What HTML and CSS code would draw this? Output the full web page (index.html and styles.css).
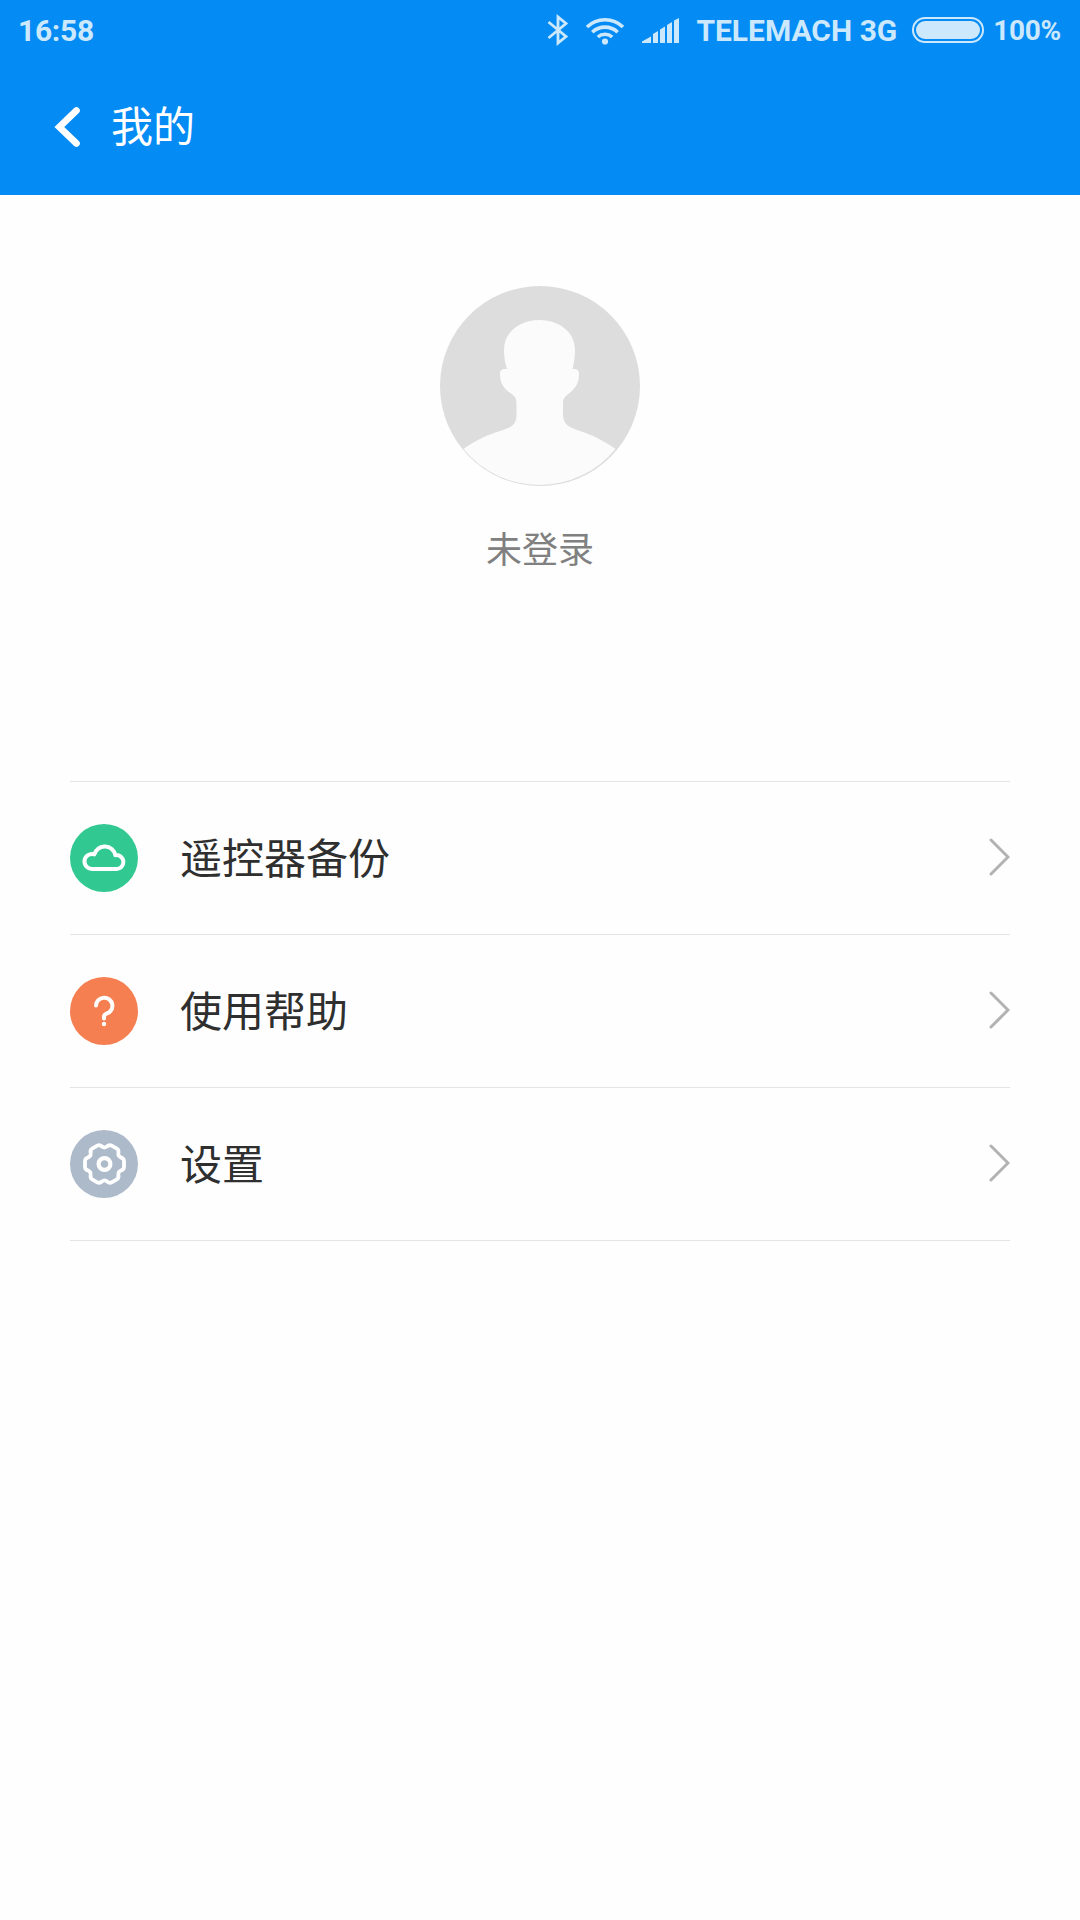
FILE: index.html
```html
<!DOCTYPE html>
<html lang="zh-CN">
<head>
    <meta charset="UTF-8">
    <meta name="viewport" content="width=device-width, initial-scale=1.0">
    <title>我的</title>
    <link rel="stylesheet" href="styles.css">
</head>
<body>

<header>
    <div class="status-bar">
        <span class="time">16:58</span>
        <div class="status-icons">
            <svg class="bluetooth" width="22" height="32" viewBox="0 0 22 32" fill="none" stroke="currentColor" stroke-width="2.8">
                <path d="M1.500 8L19 22.500L11 29V3L19 9.500L1.500 24"/>
            </svg>
            <svg class="wifi" width="40" height="30" viewBox="0 0 40 30">
                <g fill="none" stroke="currentColor" stroke-width="3.600">
                    <path d="M2 12A26 26 0 0 1 38 12"/>
                    <path d="M7.300 17.200A18.500 18.500 0 0 1 32.700 17.200"/>
                    <path d="M12.800 22A11 11 0 0 1 27.200 22"/>
                </g>
                <circle cx="20" cy="26.500" r="3.100" fill="currentColor"/>
            </svg>
            <svg class="signal" width="37" height="25" viewBox="0 0 37 25" fill="currentColor">
                <path d="M0 25V23.500L9 18.500V25ZM11 25V16L16 13V25ZM18 25V11.500L23 8.500V25ZM25 25V7L30 4V25ZM32 25V2.500L37 0V25Z"/>
            </svg>
            <span class="carrier">TELEMACH 3G</span>
            <div class="battery"><div class="battery-level"></div></div>
            <span class="percent">100%</span>
        </div>
    </div>
    <div class="title-bar">
        <svg class="back" width="30" height="44" viewBox="0 0 30 44" fill="none" stroke="#fff" stroke-width="6.700" stroke-linecap="round">
            <path d="M24.500 5.500L7.300 22L24.500 38.500"/>
        </svg>
        <h1>我的</h1>
    </div>
</header>

<div class="profile">
    <svg class="avatar" width="200" height="200" viewBox="0 0 200 200">
        <circle cx="100" cy="100" r="100" fill="#ddd"/>
        <path fill="#fbfbfb" d="M99.500 34C81 34 64 45 64 64C64 71 65 77 67 83C62 82.500 60 84 60 88C60 98 64 103 73 109C76 112 76.500 113 76.500 118V128C76.500 138 73 141 60 145C47 149 36 154 23.500 163A98.200 98.200 0 0 0 175.500 163C163 154 152 149 140 145C128 141 123 138 123 128V118C123 113 124 112 127 109C135 103 139 98 139 88C139 84 137 82.500 132.500 83C134 77 135 71 135 64C135 45 118 34 99.500 34Z"/>
    </svg>
    <div class="login-state">未登录</div>
</div>

<ul class="menu">
    <li class="menu-item">
        <svg class="icon" width="68" height="68" viewBox="0 0 68 68">
            <circle cx="34" cy="34" r="34" fill="#32c892"/>
            <path fill="none" stroke="#fff" stroke-width="4" stroke-linejoin="round" d="M22.500 45A7.500 7.500 0 1 1 24.300 30.400A10.800 10.800 0 0 1 45.300 31.200A6.950 6.950 0 1 1 46.200 45Z"/>
        </svg>
        <span class="label">遥控器备份</span>
        <svg class="arrow" width="22" height="40" viewBox="0 0 22 40"><path d="M3 3L20 20L3 37"/></svg>
    </li>
    <li class="menu-item">
        <svg class="icon" width="68" height="68" viewBox="0 0 68 68">
            <circle cx="34" cy="34" r="34" fill="#f57f51"/>
            <path fill="none" stroke="#fff" stroke-width="4" stroke-linecap="round" d="M26 28.500A8.200 8.200 0 1 1 36.500 36.700Q34 37.700 34 40V41.500"/>
            <circle cx="34" cy="47" r="2.200" fill="#fff"/>
        </svg>
        <span class="label">使用帮助</span>
        <svg class="arrow" width="22" height="40" viewBox="0 0 22 40"><path d="M3 3L20 20L3 37"/></svg>
    </li>
    <li class="menu-item">
        <svg class="icon" width="68" height="68" viewBox="0 0 68 68">
            <circle cx="34" cy="34" r="34" fill="#acbac9"/>
            <g transform="translate(34.500 34)" fill="none" stroke="#fff" stroke-width="3.800" stroke-linecap="round">
                <!-- one tooth, repeated six times -->
                <path id="tooth" d="M17.500 -6C19 -5.300 19.500 -4.300 19.500 -3V3C19.500 4.300 19 5.300 17.500 6C13.900 7.600 13.530 8.240 13.950 12.160"/>
                <use href="#tooth" transform="rotate(60)"/>
                <use href="#tooth" transform="rotate(120)"/>
                <use href="#tooth" transform="rotate(180)"/>
                <use href="#tooth" transform="rotate(240)"/>
                <use href="#tooth" transform="rotate(300)"/>
                <circle r="5.900" stroke-width="4.200"/>
            </g>
        </svg>
        <span class="label">设置</span>
        <svg class="arrow" width="22" height="40" viewBox="0 0 22 40"><path d="M3 3L20 20L3 37"/></svg>
    </li>
</ul>

</body>
</html>
```

FILE: styles.css
```css
* {
    margin: 0;
    padding: 0;
    box-sizing: border-box;
}

body {
    min-height: 100vh;
    background-color: #fefefe;
    font-family: "Noto Sans CJK SC", sans-serif;
}

header {
    height: 195px;
    background-color: #048bf4;
}

.status-bar {
    height: 60px;
    padding: 0 19px 0 18px;
    display: flex;
    justify-content: space-between;
    align-items: center;
    color: #cce8fd;
    font-family: Roboto, sans-serif;
    font-size: 30px;
    font-weight: bold;
}

.time {
    letter-spacing: -0.3px;
}

.status-icons {
    display: flex;
    align-items: center;
}

.bluetooth {
    margin-right: 16px;
}

.wifi {
    margin-right: 17px;
}

.signal {
    margin-top: 1px;
    margin-right: 17px;
}

.carrier {
    margin-right: 15px;
}

.battery {
    width: 72px;
    height: 26px;
    padding: 2px;
    border: 2px solid #cce8fd;
    border-radius: 13px;
    margin-right: 9px;
}

.battery-level {
    height: 100%;
    border-radius: 9px;
    background-color: #cce8fd;
}

.percent {
    font-size: 28px;
    letter-spacing: -0.3px;
}

.title-bar {
    height: 135px;
    padding: 0 0 2px 52px;
    display: flex;
    align-items: center;
}

.title-bar h1 {
    margin-left: 29px;
    padding-bottom: 5px;
    color: #fff;
    font-size: 42px;
    font-weight: normal;
    line-height: 60px;
}

.profile {
    height: 586px;
    padding-top: 91px;
    display: flex;
    flex-direction: column;
    align-items: center;
}

.login-state {
    margin-top: 35px;
    color: #808080;
    font-size: 36px;
    line-height: 52px;
}

.menu {
    margin: 0 70px;
    border-top: 1px solid #e4e4e4;
    list-style: none;
}

.menu-item {
    height: 153px;
    border-bottom: 1px solid #e4e4e4;
    display: flex;
    align-items: center;
}

.label {
    flex: 1;
    margin-left: 42px;
    padding-bottom: 4px;
    color: #2f2f2f;
    font-size: 42px;
    line-height: 60px;
}

.arrow {
    margin-bottom: 2px;
    fill: none;
    stroke: #b2b2b2;
    stroke-width: 3;
    stroke-linecap: round;
}
```
